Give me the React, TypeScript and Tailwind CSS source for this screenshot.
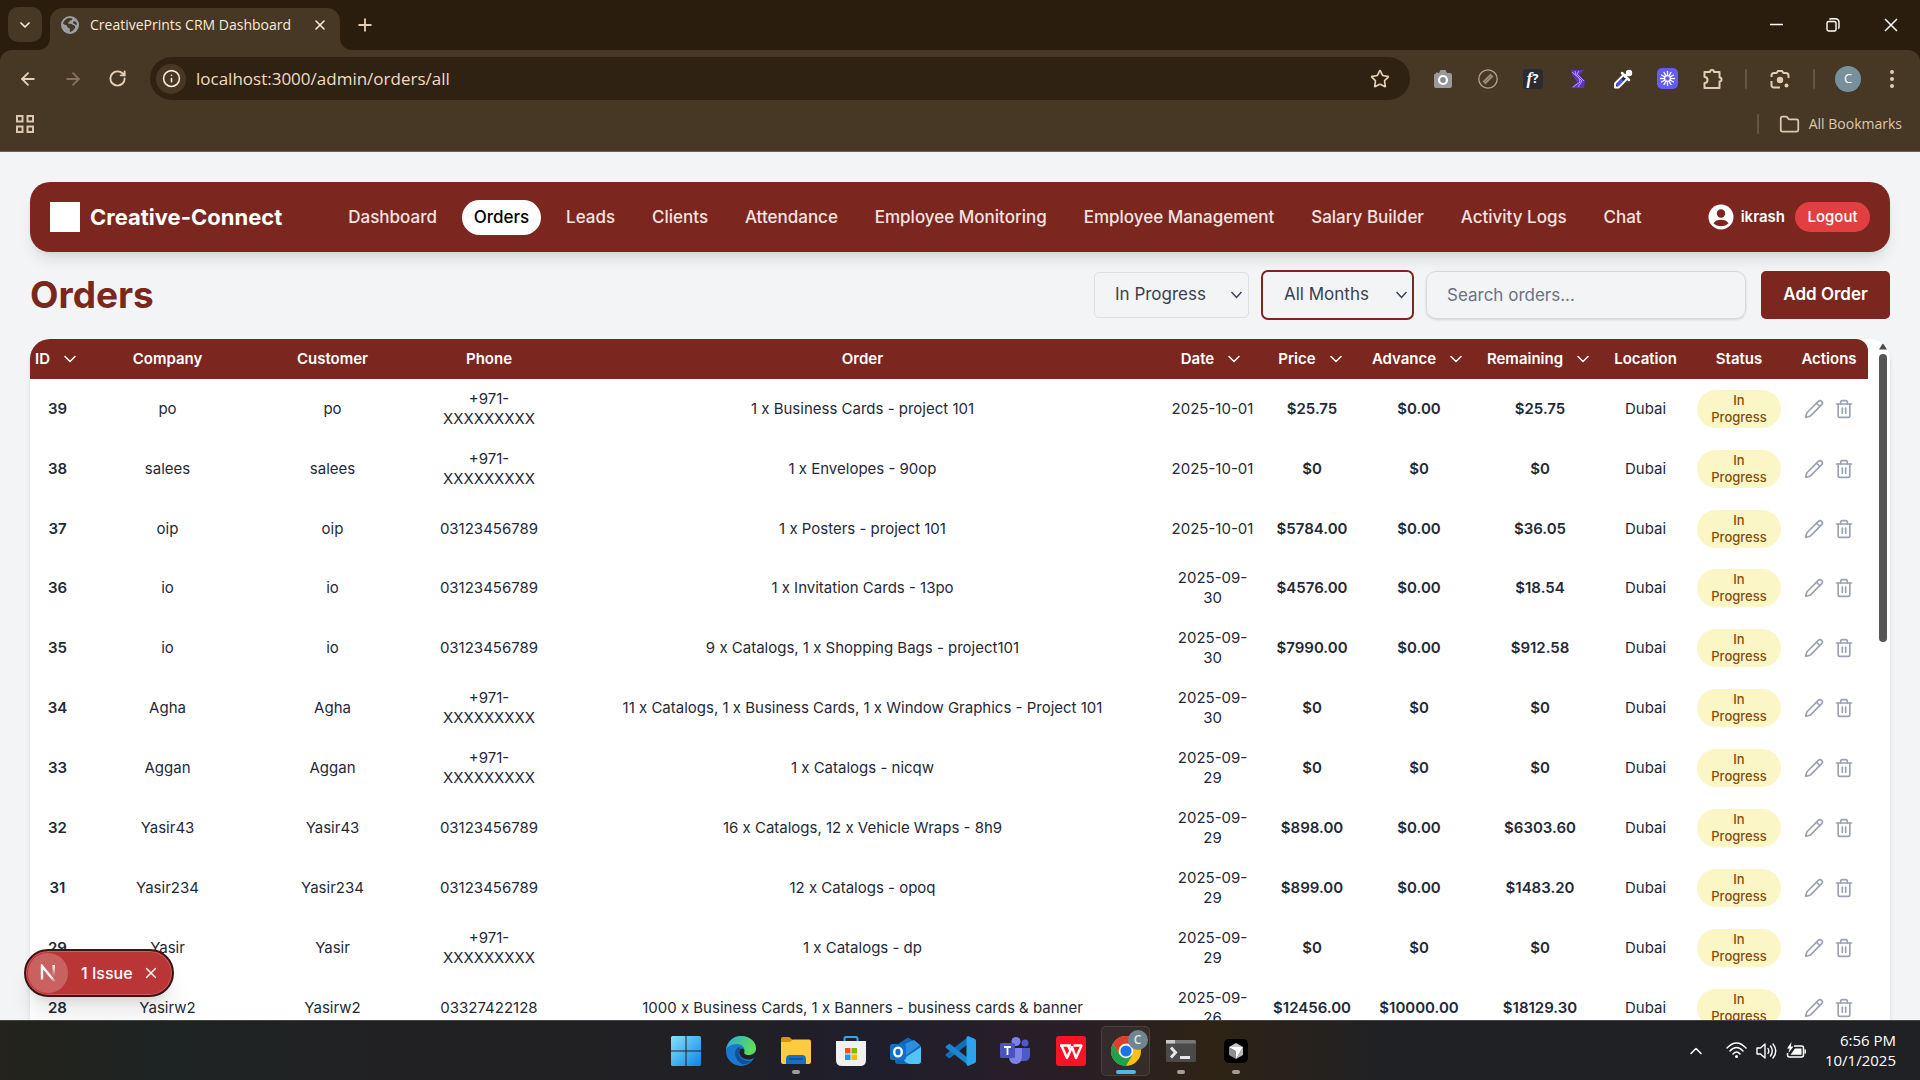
import React from "react";
import {
  ArrowLeft, ArrowRight, RotateCw, Info, Star, X, Plus, ChevronDown, ChevronUp,
  Folder, Pencil, Trash2,
} from "lucide-react";

type Order = {
  id: number; company: string; customer: string; phone: string; order: string;
  date: string; price: string; advance: string; remaining: string;
};

const XX = "+971-|XXXXXXXXX";
const orders: Order[] = [
  { id: 39, company: "po", customer: "po", phone: XX, order: "1 x Business Cards - project 101", date: "2025-10-01", price: "$25.75", advance: "$0.00", remaining: "$25.75" },
  { id: 38, company: "salees", customer: "salees", phone: XX, order: "1 x Envelopes - 90op", date: "2025-10-01", price: "$0", advance: "$0", remaining: "$0" },
  { id: 37, company: "oip", customer: "oip", phone: "03123456789", order: "1 x Posters - project 101", date: "2025-10-01", price: "$5784.00", advance: "$0.00", remaining: "$36.05" },
  { id: 36, company: "io", customer: "io", phone: "03123456789", order: "1 x Invitation Cards - 13po", date: "2025-09-|30", price: "$4576.00", advance: "$0.00", remaining: "$18.54" },
  { id: 35, company: "io", customer: "io", phone: "03123456789", order: "9 x Catalogs, 1 x Shopping Bags - project101", date: "2025-09-|30", price: "$7990.00", advance: "$0.00", remaining: "$912.58" },
  { id: 34, company: "Agha", customer: "Agha", phone: XX, order: "11 x Catalogs, 1 x Business Cards, 1 x Window Graphics - Project 101", date: "2025-09-|30", price: "$0", advance: "$0", remaining: "$0" },
  { id: 33, company: "Aggan", customer: "Aggan", phone: XX, order: "1 x Catalogs - nicqw", date: "2025-09-|29", price: "$0", advance: "$0", remaining: "$0" },
  { id: 32, company: "Yasir43", customer: "Yasir43", phone: "03123456789", order: "16 x Catalogs, 12 x Vehicle Wraps - 8h9", date: "2025-09-|29", price: "$898.00", advance: "$0.00", remaining: "$6303.60" },
  { id: 31, company: "Yasir234", customer: "Yasir234", phone: "03123456789", order: "12 x Catalogs - opoq", date: "2025-09-|29", price: "$899.00", advance: "$0.00", remaining: "$1483.20" },
  { id: 29, company: "Yasir", customer: "Yasir", phone: XX, order: "1 x Catalogs - dp", date: "2025-09-|29", price: "$0", advance: "$0", remaining: "$0" },
  { id: 28, company: "Yasirw2", customer: "Yasirw2", phone: "03327422128", order: "1000 x Business Cards, 1 x Banners - business cards & banner", date: "2025-09-|26", price: "$12456.00", advance: "$10000.00", remaining: "$18129.30" },
];

const navItems = ["Dashboard", "Orders", "Leads", "Clients", "Attendance", "Employee Monitoring", "Employee Management", "Salary Builder", "Activity Logs", "Chat"];

const columns = [
  { name: "ID", width: "w-[55px]", sortable: true },
  { name: "Company", width: "w-[165px]" },
  { name: "Customer", width: "w-[165px]" },
  { name: "Phone", width: "w-[148px]" },
  { name: "Order", width: "" },
  { name: "Date", width: "w-[101px]", sortable: true },
  { name: "Price", width: "w-[98px]", sortable: true },
  { name: "Advance", width: "w-[116px]", sortable: true },
  { name: "Remaining", width: "w-[126px]", sortable: true },
  { name: "Location", width: "w-[85px]" },
  { name: "Status", width: "w-[102px]" },
  { name: "Actions", width: "w-[78px]" },
];

function Lines({ text }: { text: string }) {
  return (
    <>
      {text.split("|").map((part) => (
        <span key={part} className="block whitespace-nowrap">{part}</span>
      ))}
    </>
  );
}

/* ---------- Browser window ---------- */

function TabStrip() {
  return (
    <div className="flex h-[50px] items-end bg-[#2b1d0d] pl-2">
      <button aria-label="Search tabs" className="mb-2 flex h-[35px] w-[34px] items-center justify-center rounded-[10px] bg-[#473725] text-[#fbe9d3]">
        <ChevronDown size={16} strokeWidth={2.6} />
      </button>
      <div className="relative ml-2 flex h-[42px] w-[290px] items-center rounded-t-[13px] bg-[#473725] pb-2 pl-[11px] pr-[10px]">
        <svg className="absolute bottom-0 -left-3" width="12" height="12" aria-hidden="true"><path d="M12 0V12H0A12 12 0 0 0 12 0Z" fill="#473725" /></svg>
        <svg className="absolute bottom-0 -right-3" width="12" height="12" aria-hidden="true"><path d="M0 0V12H12A12 12 0 0 1 0 0Z" fill="#473725" /></svg>
        <svg width="18" height="18" viewBox="0 0 18 18" aria-hidden="true">
          <circle cx="9" cy="9" r="9" fill="#9aa0a6" />
          <path d="M2 7.5C3 4 6 2 9 2l2.5.6c-.2 1.6-1.3 2-2.6 2.2-.6 1.6-2 1.4-2 2.6 1.5.4 4-.2 4.700 1.400 1.300.4 2.300 1 2.700 2-.5 2.400-2.500 4.600-5.300 5.200-.8-1.400.4-2.700-.5-3.700-1.600-.3-2.500-1.500-2.700-2.900C4.400 9 3.200 8.800 2 7.500Z" fill="#473725" />
          <path d="M12.500 5.500c.9-.3 1.800-.1 2.600.4.5 1 .8 2 .8 3-1.200.1-1.800-.7-2.900-.8-.9-.6-1.300-1.900-.5-2.600Z" fill="#473725" />
        </svg>
        <span className="ml-[11px] flex-1 whitespace-nowrap text-[14px] leading-5 text-[#fbe9d3]">CreativePrints CRM Dashboard</span>
        <button aria-label="Close tab" className="flex h-5 w-5 items-center justify-center text-[#fbe9d3]"><X size={16} strokeWidth={2.4} /></button>
      </div>
      <button aria-label="New tab" className="mb-[15px] ml-[15px] flex h-5 w-5 items-center justify-center text-[#e6d0b4]"><Plus size={20} strokeWidth={2.2} /></button>
      <div className="mb-[15px] ml-auto flex text-white">
        <button aria-label="Minimize" className="flex h-5 w-[57px] items-center justify-center"><svg width="14" height="14"><path d="M1 6.500H14" stroke="currentColor" strokeWidth="1.500" /></svg></button>
        <button aria-label="Restore" className="flex h-5 w-[58px] items-center justify-center">
          <svg width="14" height="14" viewBox="0 0 14 14" fill="none" stroke="currentColor" strokeWidth="1.400"><rect x="1" y="3.500" width="9" height="9.500" rx="1.800" /><path d="M3.500 1.500 Q4 .8 5 .8H9.500A3.500 3.500 0 0 1 13 4.300V9Q13 10 12.300 10.600" /></svg>
        </button>
        <button aria-label="Close" className="flex h-5 w-[58px] items-center justify-center"><svg width="14" height="14"><path d="M1 1L13 13M13 1L1 13" stroke="currentColor" strokeWidth="1.500" /></svg></button>
      </div>
    </div>
  );
}

function Extensions() {
  const cell = "flex h-6 w-[45px] items-center justify-center";
  return (
    <div className="flex items-center">
      <button aria-label="Screenshot" className={cell}>
        <svg width="20" height="20" viewBox="0 0 20 20"><path d="M3 3.500h2V4h1L7.500 1h5L14 4h3q2 0 2 2v11q0 2-2 2H3q-2 0-2-2V6q0-1.500 2-1.500Z" fill="#9a9a9a" /><circle cx="10" cy="11" r="4" fill="#8c8c8c" stroke="#fff" strokeWidth="2.200" /></svg>
      </button>
      <button aria-label="Page editor" className={cell}>
        <svg width="20" height="20" viewBox="0 0 20 20"><circle cx="10" cy="10" r="9.200" fill="none" stroke="#b3a28e" strokeWidth="1.300" /><path d="M6 14L14 6" stroke="#9a8d7c" strokeWidth="4" /><path d="M6.500 13.500L13.500 6.500" stroke="#75695a" strokeWidth="1" /></svg>
      </button>
      <button aria-label="Font finder" className={cell}>
        <span className="flex h-5 w-5 items-center justify-center rounded-[3px] bg-[#2a2c30] font-['Liberation_Serif',serif] text-[17px] font-bold italic leading-none text-white">f<span className="font-['Open_Sans',sans-serif] text-[13px] not-italic">?</span></span>
      </button>
      <button aria-label="Stylebot" className={cell}>
        <svg width="16" height="20" viewBox="0 0 16 20" fill="none"><path d="M1 1H14L9.500 6L15 12L14 19H1L7 13L2 6Z" fill="#5b35c8" /><path d="M2 3L9 9L10 13L3 18M5 2L6 6L12 12L8 18M9 2L7 5L14 12" stroke="#c9a9ee" strokeWidth=".9" /></svg>
      </button>
      <button aria-label="Color picker" className={cell}>
        <svg width="20" height="20" viewBox="0 0 20 20"><path d="M11 5.500L2 14.500V18.500H5.500L14.500 9.500" fill="#2b2b52" stroke="#fff" strokeWidth="2" strokeLinejoin="round" /><path d="M4 16.500L9.500 11" stroke="#4757e8" strokeWidth="3" /><path d="M9 4L16 11M12 7.500L16.500 3" stroke="#fff" strokeWidth="2.500" strokeLinecap="round" /><circle cx="16" cy="4" r="3.200" fill="#fff" /></svg>
      </button>
      <button aria-label="Loom" className={cell}>
        <svg width="21" height="21" viewBox="-10.500 -10.500 21 21"><rect x="-10.500" y="-10.500" width="21" height="21" rx="5" fill="#625df5" />{[0, 30, 60, 90, 120, 150].map((a) => <path key={a} d="M0-7.500V7.500" stroke="#fff" strokeWidth="1.300" transform={`rotate(${a})`} />)}<circle r="3" fill="#625df5" stroke="#fff" strokeWidth="1.400" /></svg>
      </button>
      <button aria-label="Extensions" className={cell}>
        <svg width="22" height="22" viewBox="0 0 22 22" fill="none" stroke="#e3cdb2" strokeWidth="2" strokeLinejoin="round"><path d="M2.500 4H8a2 2 0 0 1 4 0h5.500v5.500a2 2 0 0 1 0 4V20H2.500V15a3 3 0 0 0 0-6Z" /></svg>
      </button>
    </div>
  );
}

function Toolbar() {
  const divider = "h-5 w-[2px] rounded bg-[#685440]";
  return (
    <div className="bg-[#2b1d0d]">
      <div className="rounded-t-[12px] bg-[#473725]">
        <div className="flex h-[57px] items-center">
          <div className="flex w-[150px] items-center pl-[5px] text-[#e6d0b4]">
            <button aria-label="Back" className="flex w-[45px] justify-center"><ArrowLeft size={20} strokeWidth={2.200} /></button>
            <button aria-label="Forward" className="flex w-[45px] justify-center text-[#86725b]"><ArrowRight size={20} strokeWidth={2.200} /></button>
            <button aria-label="Reload" className="flex w-[45px] justify-center"><RotateCw size={19} strokeWidth={2.400} /></button>
          </div>
          <div className="flex h-[43px] flex-1 items-center rounded-full bg-[#302212] pl-[6px] pr-[20px]">
            <button aria-label="View site information" className="flex h-[30px] w-[30px] items-center justify-center rounded-full bg-[#473725] text-[#fbe9d3]"><Info size={19} strokeWidth={2} /></button>
            <input aria-label="Address" defaultValue="localhost:3000/admin/orders/all" className="ml-[10px] flex-1 bg-transparent text-[17px] text-[#efdcc4] outline-none" />
            <button aria-label="Bookmark this page" className="text-[#e6d0b4]"><Star size={20} strokeWidth={2} /></button>
          </div>
          <div className="ml-[10px] flex items-center">
            <Extensions />
            <span className={"ml-[10px] " + divider} />
            <button aria-label="Search with Lens" className="ml-[23px]">
              <svg width="20" height="20" viewBox="0 0 20 20" fill="none" stroke="#e3cdb2" strokeWidth="2"><path d="M1.500 8V6.500a2.500 2.500 0 0 1 2.500-2.500h2.500L8 2h4l1.500 2H16a2.500 2.500 0 0 1 2.500 2.500V9M1.500 12v3.500A2.500 2.500 0 0 0 4 18.500h6" /><circle cx="10" cy="11" r="3.200" fill="#e3cdb2" stroke="none" /><circle cx="16.500" cy="16.500" r="2" fill="#e3cdb2" stroke="none" /></svg>
            </button>
            <span className={"ml-[23px] " + divider} />
            <button aria-label="Profile" className="ml-5 flex h-[26px] w-[26px] items-center justify-center rounded-full bg-[#78909c] text-[13px] text-white">C</button>
            <button aria-label="Menu" className="ml-[25px] mr-[22px] w-[12px]"><svg className="mx-auto" width="4" height="20" fill="#e3cdb2"><circle cx="2" cy="3" r="2" /><circle cx="2" cy="10" r="2" /><circle cx="2" cy="17" r="2" /></svg></button>
          </div>
        </div>
        <div className="flex h-[45px] items-center justify-between border-b border-[#6f6254] pb-[10px] pl-4 pr-[18px] text-[#dcc8ae]">
          <button aria-label="Apps"><svg width="18" height="18" fill="none" stroke="currentColor" strokeWidth="2"><path d="M1 1h5.500v5.500H1zM11.500 1H17v5.500h-5.500zM1 11.500h5.500V17H1zM11.500 11.500H17V17h-5.500z" /></svg></button>
          <div className="flex items-center">
            <span className={divider} />
            <button className="ml-5 flex items-center gap-[9px] text-[14px] leading-5"><Folder size={21} strokeWidth={2} />All Bookmarks</button>
          </div>
        </div>
      </div>
    </div>
  );
}

/* ---------- Application ---------- */

function Navbar() {
  return (
    <nav className="flex h-[70px] items-center rounded-[20px] bg-[#7b2720] px-5 text-white shadow-lg">
      <span className="h-[30px] w-[30px] bg-white" />
      <span className="ml-[10px] text-[22px] font-bold leading-8">Creative-Connect</span>
      <div className="flex flex-1 items-center justify-between px-[54px] text-[17px] font-medium leading-[27px]">
        {navItems.map((item) =>
          item === "Orders" ? (
            <a key={item} href="#orders" aria-current="page" className="rounded-full bg-white px-3 py-1 text-black">{item}</a>
          ) : (
            <a key={item} href="#section" className="whitespace-nowrap px-3 text-[#f5e3e0]">{item}</a>
          )
        )}
      </div>
      <svg width="26" height="26" viewBox="0 0 26 26" aria-hidden="true"><circle cx="13" cy="13" r="12.500" fill="#fff" /><circle cx="13" cy="9.500" r="4.200" fill="#7b2720" /><path d="M5.500 19.200C8 14.600 18 14.600 20.500 19.200C17 23.200 9 23.200 5.500 19.200Z" fill="#7b2720" /></svg>
      <span className="ml-[7px] text-[15px] font-semibold">ikrash</span>
      <button className="ml-[10px] h-[30px] w-[75px] rounded-full bg-[#e23f40] text-[15px] font-medium leading-[30px]">Logout</button>
    </nav>
  );
}

function Filter({ label, value, options, className }: { label: string; value: string; options: string[]; className: string }) {
  return (
    <div className="relative">
      <select aria-label={label} defaultValue={value} className={"appearance-none bg-transparent text-[17px] text-[#374151] outline-none " + className}>
        {options.map((o) => <option key={o}>{o}</option>)}
      </select>
      <svg className="pointer-events-none absolute right-[7px] top-1/2 -translate-y-1/2" width="11" height="8" fill="none" stroke="#374151" strokeWidth="1.500"><path d="M.5 1L5.500 6.500L10.500 1" /></svg>
    </div>
  );
}

function PageHeader() {
  return (
    <div className="mt-[18px] flex h-[50px] items-center">
      <h1 className="text-[37px] font-bold leading-[50px] text-[#7b2720]">Orders</h1>
      <div className="ml-auto flex items-center">
        <Filter label="Status" value="In Progress" options={["In Progress", "Completed", "Pending"]} className="h-[46px] w-[155px] rounded-[5px] border border-[#dcdfe3] pl-5" />
        <div className="w-3" />
        <Filter label="Month" value="All Months" options={["All Months", "October", "September"]} className="h-[50px] w-[153px] rounded-[7px] border-2 border-[#7b2720] pl-[21px]" />
        <input aria-label="Search orders" type="search" placeholder="Search orders..." className="ml-3 h-[48px] w-[320px] rounded-[10px] border border-[#d5d9de] bg-transparent px-5 text-[17px] shadow-sm outline-none placeholder:text-[#6b7280]" />
        <button className="ml-[15px] h-[48px] w-[129px] rounded-[5px] bg-[#7b2720] text-[17px] font-semibold text-white">Add Order</button>
      </div>
    </div>
  );
}

function OrdersTable() {
  return (
    <div className="mt-[19px] flex min-h-0 flex-1 overflow-hidden rounded-t-[20px] bg-white shadow-md">
      <div className="min-w-0 flex-1">
        <table className="w-full table-fixed border-separate border-spacing-0 text-center text-[15px] leading-5 text-[#1f2937]">
          <thead>
            <tr className="h-10 text-white">
              {columns.map((c) => (
                <th key={c.name} scope="col" className={"h-10 bg-[#7b2720] p-0 font-semibold last:rounded-tr-[12px] " + c.width}>
                  {c.sortable ? (
                    <button className="mx-auto flex items-center justify-center gap-[10px] text-[15px] font-semibold">{c.name}<ChevronDown size={20} strokeWidth={1.800} /></button>
                  ) : c.name}
                </th>
              ))}
            </tr>
          </thead>
          <tbody>
            {orders.map((o) => (
              <tr key={o.id} className={o.id === 37 ? "h-[59px]" : "h-[60px]"}>
                <td className="p-0 font-semibold">{o.id}</td>
                <td className="p-0">{o.company}</td>
                <td className="p-0">{o.customer}</td>
                <td className="p-0"><Lines text={o.phone} /></td>
                <td className="p-0">{o.order}</td>
                <td className="p-0"><Lines text={o.date} /></td>
                <td className="p-0 font-semibold">{o.price}</td>
                <td className="p-0 font-semibold">{o.advance}</td>
                <td className="p-0 font-semibold">{o.remaining}</td>
                <td className="p-0">Dubai</td>
                <td className="p-0"><span className="mx-auto block w-[84px] rounded-full bg-[#fbf6c5] px-3 py-[2px] text-[13px] font-medium leading-[17px] text-[#854d0e]">In Progress</span></td>
                <td className="p-0">
                  <div className="flex justify-center gap-[10px] text-[#9aa1b0]">
                    <button aria-label={`Edit order ${o.id}`}><Pencil size={20} strokeWidth={2} /></button>
                    <button aria-label={`Delete order ${o.id}`}><Trash2 size={20} strokeWidth={2} /></button>
                  </div>
                </td>
              </tr>
            ))}
          </tbody>
        </table>
      </div>
      <div className="flex w-[22px] flex-col items-center pl-[10px] pr-[2px] pt-1" aria-hidden="true">
        <svg width="8" height="7"><path d="M4 0L8 6.500H0Z" fill="#4b4b4b" /></svg>
        <span className="mt-1 h-[288px] w-2 rounded-full bg-[#555]" />
      </div>
    </div>
  );
}

function IssueToast() {
  return (
    <div className="absolute bottom-[23px] left-6 flex h-[48px] w-[150px] items-center rounded-full border-2 border-[#3b1516] bg-[#b93536] pl-[2px] text-white shadow-xl ring-1 ring-inset ring-[#d65a5a]">
      <span className="flex h-10 w-10 items-center justify-center rounded-full bg-[#c96160]">
        <svg width="17" height="19" viewBox="0 0 17 19" fill="none" strokeWidth="2.400" aria-hidden="true">
          <defs>
            <linearGradient id="nd" x1="0" y1="0" x2="0" y2="1"><stop offset=".7" stopColor="#fff" /><stop offset="1" stopColor="#fff" stopOpacity="0" /></linearGradient>
            <linearGradient id="nv" x1="0" y1="0" x2="0" y2="1"><stop stopColor="#fff" /><stop offset="1" stopColor="#fff" stopOpacity="0" /></linearGradient>
          </defs>
          <path d="M2 16V2L15 18" stroke="url(#nd)" />
          <path d="M12.500 1H15V12H12.500Z" fill="url(#nv)" />
        </svg>
      </span>
      <button className="ml-[13px] text-[16px] font-medium">1 Issue</button>
      <button aria-label="Dismiss" className="ml-[9px]"><X size={18} strokeWidth={1.800} /></button>
    </div>
  );
}

/* ---------- Taskbar ---------- */

function TaskIcon({ name, children, active, running }: { name: string; children: React.ReactNode; active?: boolean; running?: boolean }) {
  return (
    <button aria-label={name} className="relative flex h-[60px] w-[55px] items-center justify-center">
      {active && <span className="absolute inset-x-[3px] bottom-[5px] top-[5px] rounded-[5px] border border-white/10 bg-white/5" />}
      <span className="relative">{children}</span>
      {active && <span className="absolute bottom-[7px] h-1 w-5 rounded-full bg-[#4cb8ee]" />}
      {running && <span className="absolute bottom-[7px] h-1 w-2 rounded-full bg-[#a09d9d]" />}
    </button>
  );
}

function Taskbar() {
  return (
    <footer className="relative flex h-[60px] items-center justify-center border-t border-[#444] bg-[linear-gradient(90deg,#24231c_0%,#1e2323_8%,#212123_20%,#212024_38%,#1f1e2c_45%,#2a1e26_56%,#2e2314_63%,#202125_72%)] pl-px text-white">
      <TaskIcon name="Start">
        <svg width="30" height="30"><defs><linearGradient id="win" x1="0" y1="0" x2="1" y2="1"><stop stopColor="#86e2fb" /><stop offset="1" stopColor="#0b84e8" /></linearGradient></defs><path d="M1.500 0H14.500V14.500H0V1.500Q0 0 1.500 0ZM15.500 0H28.500Q30 0 30 1.500V14.500H15.500ZM0 15.500H14.500V30H1.500Q0 30 0 28.500ZM15.500 15.500H30V28.500Q30 30 28.500 30H15.500Z" fill="url(#win)" /></svg>
      </TaskIcon>
      <TaskIcon name="Edge">
        <svg width="30" height="30" viewBox="0 0 30 30"><defs><linearGradient id="eg" x1="0" y1="0" x2="1" y2=".3"><stop stopColor="#2aa9e0" /><stop offset="1" stopColor="#5fdc58" /></linearGradient></defs><circle cx="15" cy="15" r="15" fill="#1a78d0" /><path d="M0 14C1 6 7 0 15 0C24 0 30 6 30 12C30 17 26 19 22 19C18 19 17 18 18 16C20 12 16 8 11 8C5 8 1 11 0 14Z" fill="url(#eg)" /><path d="M11 12C8 15 8 24 16 28C19 29 23 27 26 25C22 25 15 25 13 19C12 16 13 14 15 12C14 11 12 11 11 12Z" fill="#10509a" /><path d="M14.500 13C11 17 15 24 23 23.500C25 23.500 27 22.500 28.500 21.500C27 24 26 26 23 27.500C27 26 30.500 22 30.800 16L30 15C28 19 24 19.500 21 19C17 18.500 18.500 16 18.500 15C18 12 16 12 14.500 13Z" fill="#202024" /></svg>
      </TaskIcon>
      <TaskIcon name="File Explorer" running>
        <svg width="30" height="28" viewBox="0 0 30 28"><path d="M0 2Q0 0 2 0H8L12 3V10H0Z" fill="#d9940c" /><path d="M0 5H9L12 2.500H28Q30 2.500 30 4.500V25Q30 27 28 27H2Q0 27 0 25Z" fill="#fccb3f" /><path d="M5 27V22Q5 18 9 18H21Q25 18 25 22V27Z" fill="#1671c4" /><path d="M8 22H22" stroke="#0d4f93" strokeWidth="1.500" /></svg>
      </TaskIcon>
      <TaskIcon name="Microsoft Store">
        <svg width="30" height="30" viewBox="0 0 30 30"><path d="M8.500 6V2.500Q8.500 1 10 1H20Q21.500 1 21.500 2.500V6" fill="none" stroke="#32a7e8" strokeWidth="2" /><path d="M0 5H30V24Q30 30 24 30H6Q0 30 0 24Z" fill="#f1f1f2" /><path d="M9 12H14.500V17.500H9Z" fill="#f25022" /><path d="M15.500 12H21V17.500H15.500Z" fill="#7fba00" /><path d="M9 18.500H14.500V24H9Z" fill="#00a4ef" /><path d="M15.500 18.500H21V24H15.500Z" fill="#ffb900" /></svg>
      </TaskIcon>
      <TaskIcon name="Outlook">
        <svg width="31" height="28" viewBox="0 0 31 28"><path d="M5 9L17 1Q18 .5 19 1L31 9V24Q31 27 28 27H8Q5 27 5 24Z" fill="#1066b8" /><path d="M8 10L24 3L30 8L14 20Z" fill="#2e8fe0" /><path d="M31 10L13 22Q16 27 21 27H28Q31 27 31 24Z" fill="#52c4f4" /><rect y="7" width="16" height="16" rx="2" fill="#0f6fcb" /><ellipse cx="8" cy="15" rx="3.800" ry="4.400" fill="none" stroke="#fff" strokeWidth="2.400" /></svg>
      </TaskIcon>
      <TaskIcon name="Visual Studio Code">
        <svg width="31" height="30" viewBox="0 0 31 30"><path d="M23 1V8L4.500 22.500L1 20Q0 19 1 18Z" fill="#0f6fb8" /><path d="M23 29V22L4.500 7.500L1 10Q0 11 1 12Z" fill="#1a86d0" /><path d="M23 0L30 3Q31 4 31 5V25Q31 26 30 27L23 30Q21.500 29.500 21.500 28V2Q21.500 .5 23 0Z" fill="#2ba4ee" /></svg>
      </TaskIcon>
      <TaskIcon name="Teams">
        <svg width="31" height="28" viewBox="0 0 31 28"><circle cx="25" cy="6" r="3.500" fill="#5059c9" /><circle cx="16" cy="4.500" r="4.500" fill="#7b83eb" /><path d="M18 11H30V18Q30 24 24 24H18Z" fill="#5059c9" /><path d="M9 11H22V19Q22 27 15.500 27T9 19Z" fill="#7b83eb" /><rect y="6" width="15" height="15" rx="1.500" fill="#4b53bc" /><path d="M4 10H11M7.500 10V18" stroke="#fff" strokeWidth="1.800" /></svg>
      </TaskIcon>
      <TaskIcon name="WPS Office">
        <svg width="30" height="30" viewBox="0 0 30 30"><rect width="30" height="30" rx="3" fill="#fb1226" /><path d="M4 9.500H15M5.500 9.500L11 22L16 11L20 22L25.500 9.500H17.500M12 9.500L14 14" fill="none" stroke="#fff" strokeWidth="2.400" strokeLinejoin="round" /></svg>
      </TaskIcon>
      <TaskIcon name="Chrome" active>
        <svg width="30" height="30" viewBox="0 0 30 30"><circle cx="15" cy="15" r="15" fill="#fbc116" /><path d="M2 7.500A15 15 0 0 0 15 30L21.500 18.700L15 15L8.500 18.700Z" fill="#1fa04b" /><path d="M2 7.500A15 15 0 0 1 28 7.500H15A7.500 7.500 0 0 0 8.500 18.700Z" fill="#e33b2e" /><circle cx="15" cy="15" r="7.200" fill="#fff" /><circle cx="15" cy="15" r="5.600" fill="#1b73e8" /></svg>
        <span className="absolute -right-[7px] -top-[6px] flex h-5 w-5 items-center justify-center rounded-full bg-[#6f858f] text-[12px] font-semibold leading-none text-[#dfe6ea]">C</span>
      </TaskIcon>
      <TaskIcon name="Terminal" running>
        <svg width="30" height="22" viewBox="0 0 30 22"><rect width="30" height="22" rx="1.500" fill="#4a4a4a" /><path d="M0 3.500V1.500Q0 0 1.500 0H28.500Q30 0 30 1.500V3.500Z" fill="#777" /><path d="M0 0H9V3.500H0Z" fill="#c8c8c8" /><path d="M5 7.500L9.500 12.500L5 17.500M14 17.500H24" fill="none" stroke="#e6e6e6" strokeWidth="3" /></svg>
      </TaskIcon>
      <TaskIcon name="Cursor" running>
        <svg width="24" height="24" viewBox="0 0 24 24"><rect width="24" height="24" rx="5" fill="#000" /><path d="M12 4L19 8L12 12L5 8Z" fill="#c9c9c9" /><path d="M5 8L12 12V20L5 16Z" fill="#8d8d8d" /><path d="M19 8V16L12 20Z" fill="#b9b9b9" /><path d="M5 8H19L12 20V12Z" fill="#fff" /></svg>
      </TaskIcon>

      <div className="absolute inset-y-0 right-[24px] flex items-center">
        <button aria-label="Show hidden icons" className="mr-[20px]"><ChevronUp size={20} strokeWidth={1.800} /></button>
        <button aria-label="Network, volume and battery" className="mr-[18px] flex items-center gap-[9px]">
          <svg width="21" height="17" viewBox="0 0 21 17" fill="none" stroke="currentColor" strokeWidth="1.500" strokeLinecap="round"><path d="M1 6Q10.500-4 20 6M4 9Q10.500 2 17 9M7 12Q10.500 8 14 12" /><circle cx="10.500" cy="14.500" r="1.500" fill="currentColor" stroke="none" /></svg>
          <svg width="21" height="18" viewBox="0 0 21 18" fill="none" stroke="currentColor" strokeWidth="1.400" strokeLinecap="round" strokeLinejoin="round"><path d="M1 6H4.500L9 2V16L4.500 12H1ZM12 6.500Q13.500 9 12 11.500M14.500 4Q18 9 14.500 14M17 2Q22.500 9 17 16" /></svg>
          <svg width="21" height="18" viewBox="0 0 21 18" fill="none" stroke="currentColor" strokeWidth="1.500"><path d="M8 4H15.500Q17.500 4 17.500 6V13Q17.500 15 15.500 15H3.500Q1.500 15 1.500 13V11" /><path d="M9 6.500H15.500V12.800H4.500Z" fill="currentColor" stroke="none" /><path d="M18.500 7.500H20V11.500H18.500Z" fill="currentColor" stroke="none" /><path d="M5.500 0L1 6.500H3.500L2.500 11L7.500 4.500H4.800Z" fill="currentColor" stroke="none" /></svg>
        </button>
        <div className="pb-[2px] text-right text-[15px] leading-5"><div>6:56 PM</div><div>10/1/2025</div></div>
      </div>
    </footer>
  );
}

export default function App() {
  return (
    <div className="flex h-screen flex-col overflow-hidden font-['Open_Sans','Noto_Sans',sans-serif]">
      <header>
        <TabStrip />
        <Toolbar />
      </header>
      <main className="relative flex min-h-0 flex-1 flex-col overflow-hidden bg-[#f3f4f6] px-[30px] pt-[30px] font-['Inter',sans-serif]">
        <Navbar />
        <PageHeader />
        <OrdersTable />
        <IssueToast />
      </main>
      <Taskbar />
    </div>
  );
}
